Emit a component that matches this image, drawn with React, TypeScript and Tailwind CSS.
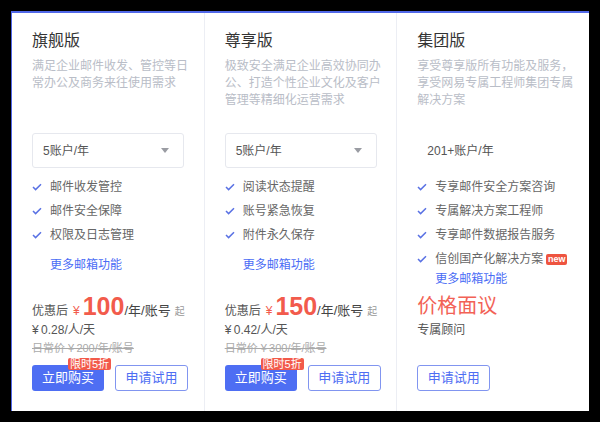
import React from 'react';

interface Plan {
  name: string;
  desc: string;
  account: string;
  select: boolean;
  features: { text: string; isNew?: boolean }[];
  price?: string;
  perDay?: string;
  origin?: string;
}

const plans: Plan[] = [
  {
    name: '旗舰版',
    desc: '满足企业邮件收发、管控等日常办公及商务来往使用需求',
    account: '5账户/年',
    select: true,
    features: [{ text: '邮件收发管控' }, { text: '邮件安全保障' }, { text: '权限及日志管理' }],
    price: '100',
    perDay: '¥\u20090.28/人/天',
    origin: '日常价 ¥\u2009200/年/账号',
  },
  {
    name: '尊享版',
    desc: '极致安全满足企业高效协同办公、打造个性企业文化及客户管理等精细化运营需求',
    account: '5账户/年',
    select: true,
    features: [{ text: '阅读状态提醒' }, { text: '账号紧急恢复' }, { text: '附件永久保存' }],
    price: '150',
    perDay: '¥\u20090.42/人/天',
    origin: '日常价 ¥\u2009300/年/账号',
  },
  {
    name: '集团版',
    desc: '享受尊享版所有功能及服务，享受网易专属工程师集团专属解决方案',
    account: '201+账户/年',
    select: false,
    features: [
      { text: '专享邮件安全方案咨询' },
      { text: '专属解决方案工程师' },
      { text: '专享邮件数据报告服务' },
      { text: '信创国产化解决方案', isNew: true },
    ],
  },
];

const Check = () => (
  <svg width="10" height="8" viewBox="0 0 10 8" className="shrink-0">
    <polyline points="1,4 3.6,6.6 9,1.2" fill="none" stroke="#5a72e4" strokeWidth="1.5" />
  </svg>
);

const PlanColumn: React.FC<{ plan: Plan; last?: boolean }> = ({ plan, last }) => {
  const many = plan.features.length > 3;
  return (
    <div
      className={
        'flex flex-col pl-[20px] pr-[8px] pt-[16px] pb-[20px] ' +
        (last ? 'w-[192px]' : 'w-[193px] border-r border-[#eceef4]')
      }
    >
      <div className="h-[24px] text-[16px] leading-[24px] text-[#333]">{plan.name}</div>
      <div className="mt-[5px] h-[51px] text-[12px] leading-[17px] text-[#b9bdc7]">{plan.desc}</div>

      {plan.select ? (
        <div className="mt-[24px] flex h-[35px] w-[152px] items-center justify-between rounded-[3px] border border-[#e6e8ee] pl-[10px] pr-[14px]">
          <span className="text-[12px] text-[#555]">{plan.account}</span>
          <svg width="8" height="5" viewBox="0 0 8 5">
            <polygon points="0,0 8,0 4,5" fill="#9a9ca3" />
          </svg>
        </div>
      ) : (
        <div className="mt-[24px] flex h-[35px] items-center pl-[10px] text-[12px] text-[#555]">{plan.account}</div>
      )}

      <div className="mt-[7px] flex flex-col">
        {plan.features.map((f) => (
          <div key={f.text} className="flex h-[24px] items-center">
            <Check />
            <span className="ml-[8px] text-[12px] text-[#666]">{f.text}</span>
            {f.isNew && (
              <span className="ml-[3px] flex h-[11px] w-[21px] items-center justify-center rounded-[2px] bg-[#ee5440] text-[9px] font-bold leading-none text-white">
                new
              </span>
            )}
          </div>
        ))}
        <div
          className={
            'pl-[18px] text-[12px] text-[#4a6cf5] ' + (many ? 'h-[16px] leading-[16px]' : 'mt-[6px] h-[24px] leading-[24px]')
          }
        >
          更多邮箱功能
        </div>
      </div>

      <div className="mt-auto flex flex-col">
        {plan.price ? (
          <>
            <div className="flex h-[30px] items-baseline whitespace-nowrap">
              <span className="text-[12px] text-[#555]">优惠后</span>
              <span className="ml-[5px] text-[12px] text-[#f25b4c]">¥</span>
              <span className="ml-[3px] text-[25px] font-bold leading-[30px] text-[#f25b4c]">{plan.price}</span>
              <span className="text-[13px] text-[#444]">/年/账号</span>
              <span className="ml-[4px] text-[10px] text-[#999]">起</span>
            </div>
            <div className="h-[18px] text-[12px] leading-[18px] text-[#555]">{plan.perDay}</div>
            <div className="h-[18px] text-[11px] leading-[18px] text-[#aaa] line-through">{plan.origin}</div>
          </>
        ) : (
          <>
            <div className="h-[30px] text-[20px] leading-[30px] text-[#f26256]">价格面议</div>
            <div className="h-[18px] text-[12px] leading-[18px] text-[#555]">专属顾问</div>
            <div className="h-[18px]" />
          </>
        )}
        <div className="mt-[8px] flex gap-[11px]">
          {plan.price && (
            <div className="relative">
              <button className="h-[26px] w-[72px] rounded-[3px] bg-[#4e6ef3] text-[13px] text-white">立即购买</button>
              <span className="absolute left-[36px] top-[-7px] flex h-[12px] w-[43px] items-center justify-center rounded-[2px] bg-[#f25a4b] text-[11px] leading-none text-white">
                限时5折
              </span>
            </div>
          )}
          <button className="h-[26px] w-[73px] rounded-[3px] border border-[#8195f0] text-[13px] text-[#4e6ef3]">
            申请试用
          </button>
        </div>
      </div>
    </div>
  );
};

export default function App() {
  return (
    <div
      className="h-[422px] w-[600px] bg-black pl-[11px] pt-[11px]"
      style={{ fontFamily: '"Liberation Sans", "Noto Sans CJK SC", sans-serif' }}
    >
      <div className="flex h-[400px] w-[578px] border-l border-t-2 border-[#5168e8] bg-white">
        {plans.map((p, i) => (
          <PlanColumn key={p.name} plan={p} last={i === plans.length - 1} />
        ))}
      </div>
    </div>
  );
}
